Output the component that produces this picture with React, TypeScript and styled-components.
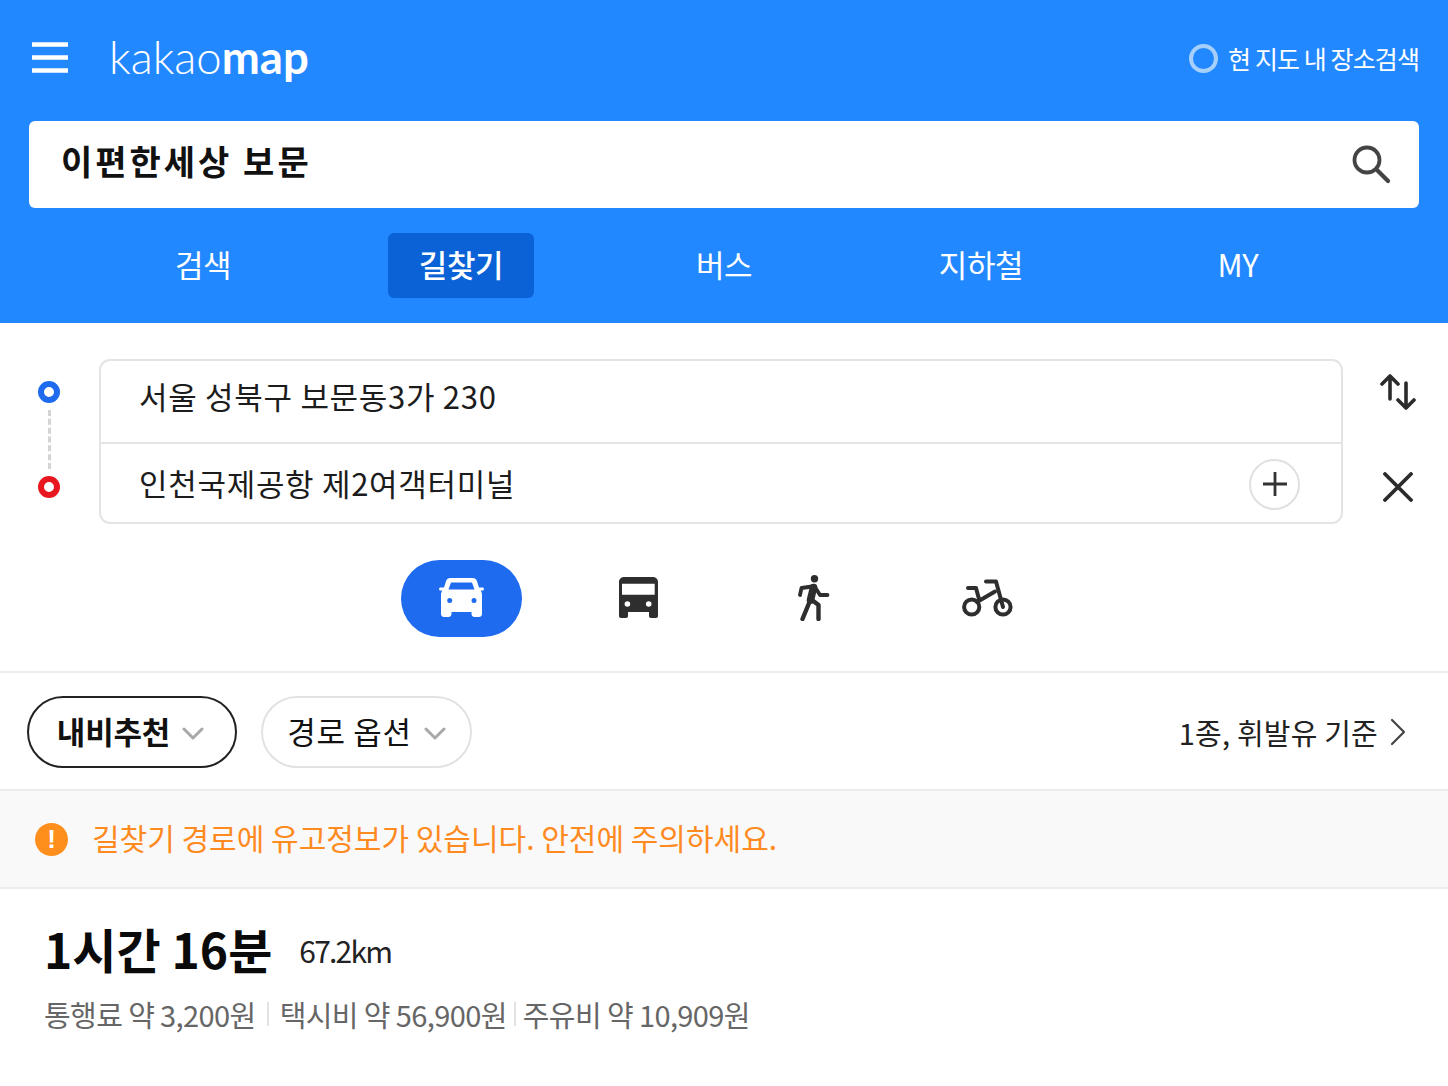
import { createGlobalStyle, styled } from "styled-components";

const GlobalStyle = createGlobalStyle`
  html, body {
    margin: 0;
    padding: 0;
    background: #fff;
  }
  body {
    font-family: "Noto Sans CJK KR", "Noto Sans", sans-serif;
    color: #111;
  }
  * {
    box-sizing: border-box;
  }
`;

const tabs = [
  { label: "검색", width: 258 },
  { label: "길찾기", width: 258, active: true },
  { label: "버스", width: 268 },
  { label: "지하철", width: 246 },
  { label: "MY", width: 268 },
];

const MenuIcon = () => (
  <svg width="36" height="32" viewBox="0 0 36 32">
    <path d="M0 2.500h36M0 15.500h36M0 28.500h36" stroke="#fff" strokeWidth="4.400" />
  </svg>
);

const SearchIcon = () => (
  <svg width="42" height="42" viewBox="0 0 42 42" fill="none">
    <circle cx="17" cy="16" r="12.500" stroke="#444" strokeWidth="3.800" />
    <path d="M26.500 25.500 L38 37" stroke="#444" strokeWidth="4.200" strokeLinecap="round" />
  </svg>
);

const SwapIcon = () => (
  <svg width="36" height="36" viewBox="0 0 36 36" fill="none" stroke="#2b2b2b" strokeWidth="3.600" strokeLinecap="round" strokeLinejoin="round">
    <path d="M10 25V2M2 10l8-8 8 8" />
    <path d="M26 9v25M18 26l8 8 8-8" />
  </svg>
);

const CloseIcon = () => (
  <svg width="30" height="30" viewBox="0 0 30 30" fill="none" stroke="#2b2b2b" strokeWidth="3.800" strokeLinecap="round">
    <path d="M2 2l26 26M28 2L2 28" />
  </svg>
);

const PlusIcon = () => (
  <svg width="26" height="26" viewBox="0 0 26 26" fill="none" stroke="#333" strokeWidth="2.800">
    <path d="M13 1v24M1 13h24" />
  </svg>
);

const CarIcon = () => (
  <svg width="45" height="39" viewBox="0 0 45 39" fill="#fff">
    <path
      fillRule="evenodd"
      d="M11.500 0h22c2.200 0 3.800 1.200 4.500 3.200L40 9.500h3.500c.8 0 1.500 .7 1.500 1.500s-.7 1.500-1.500 1.500h-1.800c.8 1.200 1.300 2.800 1.300 4.500v19c0 1.500-1 3-3 3h-4.500c-2 0-3-1.500-3-3v-2H12.500v2c0 1.500-1 3-3 3H5c-2 0-3-1.500-3-3V17c0-1.700 .5-3.300 1.300-4.500H1.500C.7 12.500 0 11.800 0 11s.7-1.500 1.500-1.500H5l2-6.300C7.700 1.200 9.300 0 11.500 0zM12 4.500L9.500 11.500h26L33 4.500H12zM10.700 19.900a2.500 2.500 0 1 0 0 5 2.500 2.500 0 0 0 0-5zM35 19.900a2.500 2.500 0 1 0 0 5 2.500 2.500 0 0 0 0-5z"
    />
  </svg>
);

const BusIcon = () => (
  <svg width="39" height="41" viewBox="0 0 39 41" fill="#2e2e2e">
    <path
      fillRule="evenodd"
      d="M5 0h29c2.800 0 5 2.200 5 5v34c0 1.200-.8 2-2 2h-5c-1.200 0-2-.8-2-2v-4H9v4c0 1.200-.8 2-2 2H2c-1.200 0-2-.8-2-2V5c0-2.800 2.200-5 5-5zM3 6.700v11h32.700v-11H3zM8.400 24.200a2.800 2.800 0 1 0 0 5.600 2.800 2.800 0 0 0 0-5.600zM29.700 24.200a2.800 2.800 0 1 0 0 5.600 2.800 2.800 0 0 0 0-5.600z"
    />
  </svg>
);

const WalkIcon = () => (
  <svg width="32" height="46" viewBox="0 0 32 46" fill="none" stroke="#2e2e2e" strokeLinecap="round" strokeLinejoin="round">
    <circle cx="16.500" cy="3.800" r="3.700" fill="#2e2e2e" stroke="none" />
    <path d="M15.500 12.500L12.500 25" strokeWidth="7.500" />
    <path d="M14 11.500L3.500 13 2 20" strokeWidth="3.800" />
    <path d="M17.500 13l4.500 7h7.500" strokeWidth="3.800" />
    <path d="M11.500 27L4.500 44" strokeWidth="4.400" />
    <path d="M14 25l6.500 5v14" strokeWidth="4.400" />
  </svg>
);

const BikeIcon = () => (
  <svg width="56" height="40" viewBox="0 0 56 40" fill="none" stroke="#2e2e2e" strokeWidth="4" strokeLinecap="round" strokeLinejoin="round">
    <circle cx="9.700" cy="29" r="7.600" />
    <circle cx="41" cy="29" r="7.600" />
    <path d="M24 3.500h10L41 29" />
    <path d="M6 10h8l3 11" />
    <path d="M15 24L33 13.500" />
  </svg>
);

const ChevronIcon = () => (
  <svg width="22" height="13" viewBox="0 0 22 13" fill="none" stroke="#a8a8a8" strokeWidth="3" strokeLinecap="round" strokeLinejoin="round">
    <path d="M2 2l9 9 9-9" />
  </svg>
);

const ArrowIcon = () => (
  <svg width="16" height="28" viewBox="0 0 16 28" fill="none" stroke="#444" strokeWidth="2.200" strokeLinecap="round" strokeLinejoin="round">
    <path d="M2 2l12 12L2 26" />
  </svg>
);

export default function App() {
  return (
    <Page>
      <GlobalStyle />
      <Header>
        <TopBar>
          <TopLeft>
            <MenuIcon />
            <Logo>
              kakao<b>map</b>
            </Logo>
          </TopLeft>
          <AreaSearch>
            <Ring />
            <span>현 지도 내 장소검색</span>
          </AreaSearch>
        </TopBar>
        <SearchBox>
          <SearchText>이편한세상 보문</SearchText>
          <SearchIcon />
        </SearchBox>
        <Tabs>
          {tabs.map((tab) => (
            <TabCell key={tab.label} $width={tab.width}>
              <Tab $active={tab.active}>{tab.label}</Tab>
            </TabCell>
          ))}
        </Tabs>
      </Header>

      <RouteForm>
        <Markers>
          <Dot $color="#1f6bf0" />
          <Dashes />
          <Dot $color="#e8171f" />
        </Markers>
        <Inputs>
          <InputRow $first>서울 성북구 보문동3가 230</InputRow>
          <InputRow>
            인천국제공항 제2여객터미널
            <AddButton>
              <PlusIcon />
            </AddButton>
          </InputRow>
        </Inputs>
        <FormActions>
          <SwapIcon />
          <CloseIcon />
        </FormActions>
      </RouteForm>

      <Modes>
        <Mode $active>
          <CarIcon />
        </Mode>
        <Mode>
          <BusIcon />
        </Mode>
        <Mode>
          <WalkIcon />
        </Mode>
        <Mode>
          <BikeIcon />
        </Mode>
      </Modes>

      <Filters>
        <Pill $selected>
          내비추천
          <ChevronIcon />
        </Pill>
        <Pill>
          경로 옵션
          <ChevronIcon />
        </Pill>
        <FuelLink>
          1종, 휘발유 기준
          <ArrowIcon />
        </FuelLink>
      </Filters>

      <Notice>
        <NoticeBadge>!</NoticeBadge>
        <NoticeText>길찾기 경로에 유고정보가 있습니다. 안전에 주의하세요.</NoticeText>
      </Notice>

      <Summary>
        <TimeRow>
          <Time>1시간 16분</Time>
          <Distance>67.2km</Distance>
        </TimeRow>
        <Costs>
          <span>통행료 약 3,200원</span>
          <CostDivider $space={11} />
          <span>택시비 약 56,900원</span>
          <CostDivider $space={7} />
          <span>주유비 약 10,909원</span>
        </Costs>
      </Summary>
    </Page>
  );
}

const Page = styled.div`
  width: 1448px;
  height: 1086px;
  overflow: hidden;
  background: #fff;
`;

const Header = styled.header`
  height: 323px;
  padding: 0 29px;
  background: #2288ff;
`;

const TopBar = styled.div`
  height: 121px;
  padding-bottom: 5px;
  display: flex;
  align-items: center;
  justify-content: space-between;
`;

const TopLeft = styled.div`
  display: flex;
  align-items: center;
  gap: 41px;
  padding-left: 3px;
`;

const Logo = styled.div`
  font-family: "Lato", sans-serif;
  font-size: 45.5px;
  font-weight: 300;
  line-height: 1;
  color: #fff;
  margin-top: -2px;
  b {
    font-weight: 700;
  }
`;

const AreaSearch = styled.div`
  display: flex;
  align-items: center;
  gap: 10px;
  font-size: 25px;
  letter-spacing: -0.9px;
  color: #fff;
`;

const Ring = styled.span`
  width: 29px;
  height: 29px;
  border-radius: 50%;
  border: 4px solid #a6cffb;
`;

const SearchBox = styled.div`
  height: 87px;
  display: flex;
  align-items: center;
  justify-content: space-between;
  padding: 0 27px 0 32px;
  border-radius: 6px;
  background: #fff;
`;

const SearchText = styled.div`
  font-size: 34px;
  font-weight: 700;
  letter-spacing: 3px;
  color: #111;
  margin-top: -9px;
`;

const Tabs = styled.nav`
  display: flex;
  padding: 25px 0 0 45px;
`;

const TabCell = styled.div<{ $width: number }>`
  width: ${(p) => p.$width}px;
  display: flex;
  justify-content: center;
`;

const Tab = styled.div<{ $active?: boolean }>`
  height: 65px;
  width: ${(p) => (p.$active ? "146px" : "auto")};
  padding-bottom: 5px;
  display: flex;
  align-items: center;
  justify-content: center;
  border-radius: 6px;
  font-size: 31px;
  font-weight: ${(p) => (p.$active ? 500 : 400)};
  letter-spacing: -0.4px;
  color: #fff;
  background: ${(p) => (p.$active ? "#0b62d6" : "transparent")};
`;

const RouteForm = styled.section`
  display: flex;
  padding: 36px 29px 0 38px;
`;

const Markers = styled.div`
  width: 22px;
  height: 165px;
  margin-right: 39px;
  display: flex;
  flex-direction: column;
  align-items: center;
  justify-content: space-between;
  padding: 22px 0 26px;
`;

const Dot = styled.span<{ $color: string }>`
  width: 22px;
  height: 22px;
  flex: none;
  border-radius: 50%;
  border: 6px solid ${(p) => p.$color};
  background: #fff;
`;

const Dashes = styled.span`
  flex: 1;
  margin: 7px 0;
  border-left: 3px dashed #d4d4d4;
`;

const Inputs = styled.div`
  flex: 1;
  height: 165px;
  border: 2px solid #e4e4e4;
  border-radius: 11px;
`;

const InputRow = styled.div<{ $first?: boolean }>`
  height: ${(p) => (p.$first ? "81px" : "80px")};
  display: flex;
  align-items: center;
  justify-content: space-between;
  padding: ${(p) => (p.$first ? "0 41px 12px 38px" : "0 41px 2px 38px")};
  font-size: 31px;
  letter-spacing: 0.7px;
  color: #1c1c1c;
  & + & {
    border-top: 2px solid #e4e4e4;
  }
`;

const AddButton = styled.span`
  width: 51px;
  height: 51px;
  margin-top: 4px;
  display: flex;
  align-items: center;
  justify-content: center;
  border: 2px solid #e0e0e0;
  border-radius: 50%;
`;

const FormActions = styled.div`
  width: 76px;
  height: 165px;
  display: flex;
  flex-direction: column;
  align-items: center;
  justify-content: space-between;
  padding: 15px 0 22px 34px;
`;

const Modes = styled.div`
  height: 149px;
  padding-top: 2px;
  display: flex;
  align-items: center;
  padding-left: 401px;
  gap: 56px;
  border-bottom: 2px solid #ececec;
`;

const Mode = styled.div<{ $active?: boolean }>`
  width: ${(p) => (p.$active ? "121px" : "120px")};
  height: 77px;
  padding-bottom: 2px;
  display: flex;
  align-items: center;
  justify-content: center;
  border-radius: 39px;
  background: ${(p) => (p.$active ? "#1f6bf0" : "transparent")};
`;

const Filters = styled.div`
  height: 118px;
  display: flex;
  align-items: center;
  gap: 24px;
  padding: 2px 42px 0 27px;
  border-bottom: 2px solid #ececec;
`;

const Pill = styled.div<{ $selected?: boolean }>`
  height: 72px;
  width: ${(p) => (p.$selected ? "210px" : "211px")};
  display: flex;
  align-items: center;
  justify-content: center;
  gap: 12px;
  padding: 0 ${(p) => (p.$selected ? "3px" : "0")} 4px 0;
  border-radius: 36px;
  border: 2px solid ${(p) => (p.$selected ? "#222" : "#e2e2e2")};
  font-size: 31px;
  font-weight: ${(p) => (p.$selected ? 700 : 400)};
  letter-spacing: ${(p) => (p.$selected ? "-0.2px" : "0.7px")};
  color: #111;
  svg {
    margin-top: 6px;
  }
`;

const FuelLink = styled.div`
  margin-left: auto;
  display: flex;
  align-items: center;
  gap: 12px;
  font-size: 29px;
  letter-spacing: 0.2px;
  color: #222;
`;

const Notice = styled.div`
  height: 98px;
  display: flex;
  align-items: center;
  gap: 24px;
  padding-left: 35px;
  background: #f9f9f9;
  border-bottom: 2px solid #ececec;
  font-size: 30px;
  color: #ff8a1f;
`;

const NoticeText = styled.span`
  margin-top: -4px;
`;

const NoticeBadge = styled.span`
  width: 33px;
  height: 33px;
  display: flex;
  align-items: center;
  justify-content: center;
  border-radius: 50%;
  background: #ff8f1c;
  color: #fff;
  font-family: "Liberation Sans", sans-serif;
  font-size: 26px;
  font-weight: 700;
`;

const Summary = styled.section`
  padding: 24px 0 0 44px;
`;

const TimeRow = styled.div`
  display: flex;
  align-items: center;
  gap: 27px;
`;

const Time = styled.div`
  font-size: 48px;
  font-weight: 700;
  color: #0a0a0a;
`;

const Distance = styled.div`
  margin-top: 3px;
  font-size: 30px;
  letter-spacing: -1.8px;
  color: #222;
`;

const Costs = styled.div`
  display: flex;
  align-items: center;
  margin-top: 10px;
  font-size: 29px;
  letter-spacing: -0.6px;
  color: #666;
`;

const CostDivider = styled.span<{ $space: number }>`
  width: 2px;
  height: 24px;
  margin: 0 ${(p) => p.$space}px;
  background: #e2e2e2;
`;
